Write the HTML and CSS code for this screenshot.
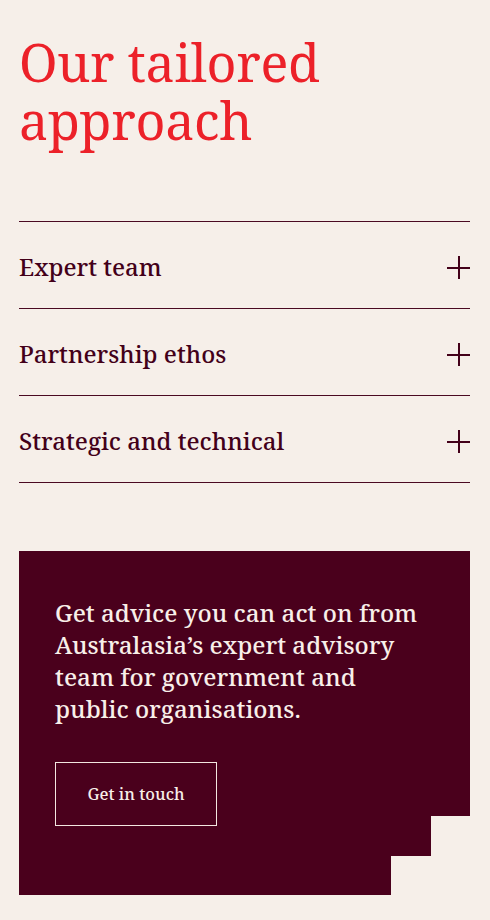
FILE: index.html
```html
<!DOCTYPE html>
<html lang="en">
<head>
<meta charset="utf-8">
<title>Our tailored approach</title>
<link rel="stylesheet" href="styles.css">
</head>
<body>
<main class="page">
  <h1 class="title">Our tailored approach</h1>
  <ul class="accordion">
    <li class="item"><span class="item-label">Expert team</span><span class="plus" aria-hidden="true"></span></li>
    <li class="item"><span class="item-label">Partnership ethos</span><span class="plus" aria-hidden="true"></span></li>
    <li class="item"><span class="item-label">Strategic and technical</span><span class="plus" aria-hidden="true"></span></li>
  </ul>
  <section class="cta">
    <p class="cta-text">Get advice you can act on from Australasia’s expert advisory team for government and public organisations.</p>
    <a class="cta-button" href="#">Get in touch</a>
  </section>
</main>
</body>
</html>
```
FILE: styles.css
```css
html, body {
  margin: 0;
  padding: 0;
  background: #f6efe9;
}
body {
  font-family: "Noto Serif", "DejaVu Serif", "Liberation Serif", serif;
}
.page {
  padding: 33px 20px 25px 19px;
}
.title {
  margin: 0 0 72px 0;
  font-weight: 400;
  font-size: 52px;
  line-height: 58px;
  color: #ec2129;
  letter-spacing: -0.3px;
}
.accordion {
  list-style: none;
  margin: 0;
  padding: 0;
  border-top: 1px solid #4a0a22;
}
.item {
  display: flex;
  align-items: center;
  justify-content: space-between;
  height: 86px;
  border-bottom: 1px solid #4a0a22;
  color: #430019;
}
.item-label {
  font-size: 24px;
  font-weight: 500;
  padding-top: 2px;
}
.plus {
  position: relative;
  width: 23px;
  height: 23px;
  margin-top: 5px;
}
.plus::before, .plus::after {
  content: "";
  position: absolute;
  background: #430019;
}
.plus::before {
  left: 0;
  right: 0;
  top: 10.5px;
  height: 2px;
}
.plus::after {
  top: 0;
  bottom: 0;
  left: 10.5px;
  width: 2px;
}
.cta {
  margin-top: 68px;
  background: #4a001c;
  padding: 46px 36px 69px 36px;
  clip-path: polygon(0 0, 100% 0, 100% calc(100% - 79px), calc(100% - 39px) calc(100% - 79px), calc(100% - 39px) calc(100% - 39px), calc(100% - 79px) calc(100% - 39px), calc(100% - 79px) 100%, 0 100%);
}
.cta-text {
  margin: 0 0 37.6px 0;
  color: #f8efe9;
  font-size: 24.2px;
  font-weight: 500;
  line-height: 31.85px;
}
.cta-button {
  display: inline-flex;
  align-items: center;
  justify-content: center;
  width: 162px;
  height: 64px;
  box-sizing: border-box;
  border: 1px solid #f3e6e0;
  color: #f8efe9;
  text-decoration: none;
  font-size: 16.5px;
  font-weight: 500;
  vertical-align: top;
}
```
